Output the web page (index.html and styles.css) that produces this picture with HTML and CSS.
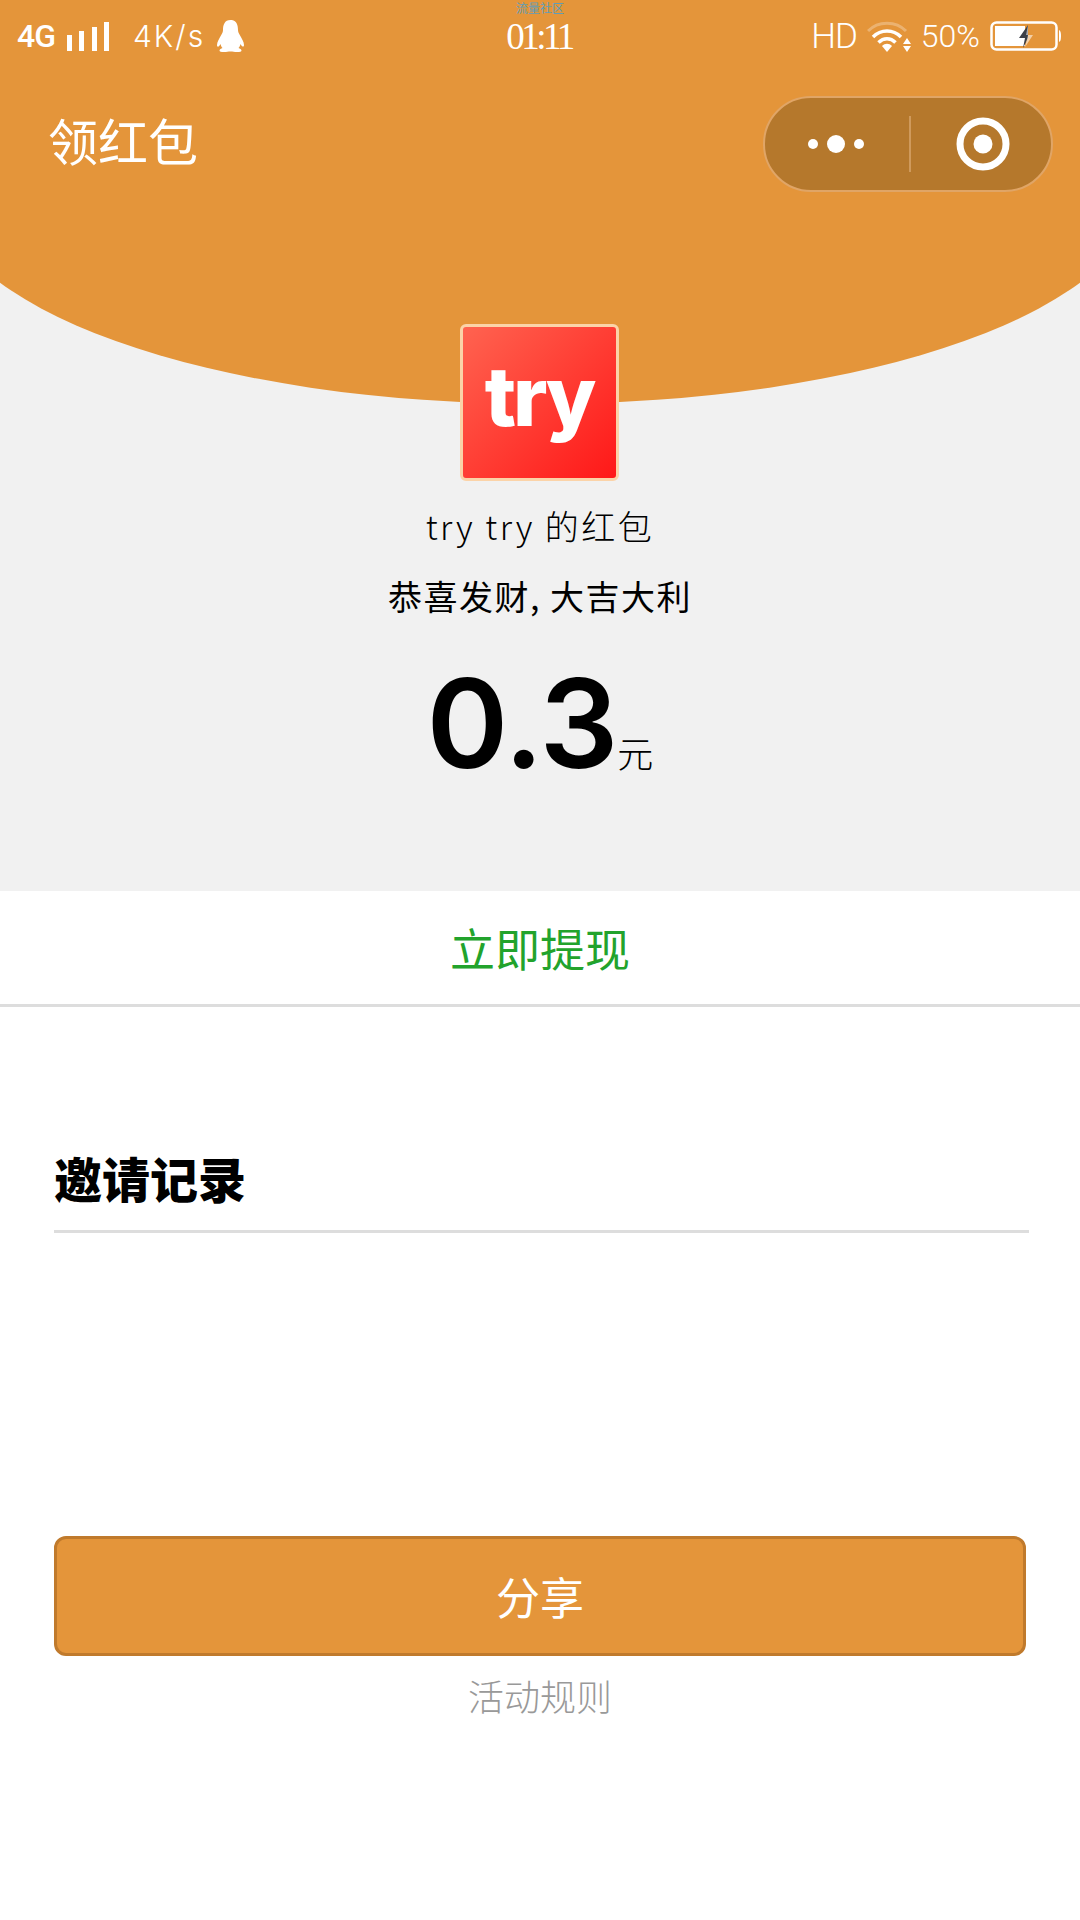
FILE: index.html
```html
<!DOCTYPE html>
<html lang="zh">
<head>
<meta charset="utf-8">
<title>领红包</title>
<link rel="stylesheet" href="styles.css">
</head>
<body>
<div class="page">
  <section class="hero">
    <div class="arc"></div>
    <div class="carrier">流量社区</div>
    <header class="status">
      <div class="status-left">
        <span class="net">4G</span>
        <svg class="signal" width="42" height="29" viewBox="0 0 42 29"><path d="M0 13h5v16H0zM12 9h5v20h-5zM25 5h5v24h-5zM37 0h5v29h-5z" fill="#fff"/></svg>
        <span class="speed">4K/s</span>
        <svg class="qq" width="27" height="32" viewBox="0 0 27 32"><path d="M13.500 0C7.500 0 6 5 6 10c0 1.500-.5 2.800-1.500 4.500C2.500 18 0 22 0 25c0 1.500.7 2 1.500 1.500.8-.5 1.500-1.500 2-2.500.3 1.500 1 3 2 4-1.500.6-3 1.300-3 2.500S4 32 7 32c2.500 0 4.500-.6 6.500-.6s4 .6 6.500.6c3 0 4.500-.4 4.500-1.600s-1.500-1.900-3-2.500c1-1 1.700-2.500 2-4 .5 1 1.200 2 2 2.500.8.5 1.500 0 1.500-1.500 0-3-2.500-7-4.500-10.500-1-1.700-1.500-3-1.500-4.500 0-5-1.500-10-7.500-10z" fill="#fff"/></svg>
      </div>
      <span class="time">01:11</span>
      <div class="status-right">
        <span class="hd">HD</span>
        <svg class="wifi" width="46" height="32" viewBox="0 0 46 32"><path d="M1 11C11 .5 29 .5 39 11" fill="none" stroke="#fff" stroke-opacity=".28" stroke-width="3"/><path d="M6 17c8-8 20-8 28 0" fill="none" stroke="#fff" stroke-width="3.500"/><path d="M11.500 22.500c5-5 12-5 17 0" fill="none" stroke="#fff" stroke-width="3.500"/><path d="M15 26c3-3 7-3 10 0l-5 6z" fill="#fff"/><path d="M40 18l4 6h-8zM40 32l4-6h-8z" fill="#fff"/></svg>
        <span class="percent">50%</span>
        <svg class="battery" width="71" height="30" viewBox="0 0 71 30"><rect x="1.500" y="1.500" width="65" height="27" rx="5" fill="none" stroke="#fff" stroke-width="2.500"/><rect x="5" y="5" width="30" height="20" fill="#fff"/><path d="M69 9c1.500.5 2 2.500 2 6s-.5 5.500-2 6z" fill="#fff"/><path d="M38 4l-9 13h6l-2 10 5-10z" fill="#3c3f47"/><path d="M38 4l-2 10h7l-8 12 3-12z" fill="#fff" fill-opacity=".55"/></svg>
      </div>
    </header>
    <nav class="nav">
      <h1 class="nav-title">领红包</h1>
      <div class="capsule">
        <div class="capsule-part capsule-more">
          <svg width="60" height="20" viewBox="0 0 60 20"><circle cx="5" cy="10" r="5" fill="#fff"/><circle cx="28" cy="10" r="9" fill="#fff"/><circle cx="51" cy="10" r="5" fill="#fff"/></svg>
        </div>
        <div class="capsule-line"></div>
        <div class="capsule-part capsule-target">
          <svg width="54" height="54" viewBox="0 0 54 54"><circle cx="27" cy="27" r="23" fill="none" stroke="#fff" stroke-width="7"/><circle cx="27" cy="27" r="9.500" fill="#fff"/></svg>
        </div>
      </div>
    </nav>
    <div class="summary">
      <div class="logo">try</div>
      <p class="sender">try try 的红包</p>
      <p class="wish">恭喜发财, 大吉大利</p>
      <p class="amount"><span class="amount-value">0.3</span><span class="amount-unit">元</span></p>
    </div>
  </section>
  <div class="withdraw">立即提现</div>
  <section class="records">
    <h2 class="records-title">邀请记录</h2>
  </section>
  <button class="share" type="button">分享</button>
  <div class="rules">活动规则</div>
</div>
</body>
</html>
```

FILE: styles.css
```css
* { box-sizing: border-box; }
html, body { margin: 0; padding: 0; background: #fff; }
body { font-family: "Noto Sans CJK SC", "Noto Sans", sans-serif; color: #000; }
p, h1, h2 { margin: 0; }
.page { width: 1080px; height: 1920px; overflow: hidden; background: #fff; }

.hero { position: relative; height: 891px; background: #f1f1f1; overflow: hidden; }
.arc { position: absolute; left: -60px; top: 0; width: 1200px; height: 404px; border-radius: 0 0 600px 600px / 0 0 215px 215px; background: #e4953a; }
.carrier { position: absolute; top: 0; left: 0; right: 0; text-align: center; font-size: 12px; line-height: 16px; color: #5f9db8; }

.status { position: relative; height: 72px; display: grid; grid-template-columns: 1fr auto 1fr; align-items: center; padding: 0 19px 0 17px; color: #fff; }
.status-left, .status-right { display: flex; align-items: center; }
.status-right { justify-content: flex-end; }
.net { font-family: Roboto, sans-serif; font-weight: 500; font-size: 32px; letter-spacing: -1px; }
.signal { margin-left: 12px; }
.speed { margin-left: 24px; font-family: Inter, sans-serif; font-weight: 300; font-size: 30px; letter-spacing: 2px; }
.qq { margin-left: 12px; }
.time { font-family: "Liberation Serif", serif; font-size: 37px; letter-spacing: -3.500px; }
.hd { font-family: Roboto, sans-serif; font-weight: 300; font-size: 35px; letter-spacing: -1px; }
.wifi { margin-left: 10px; }
.percent { margin-left: 8px; font-family: Roboto, sans-serif; font-weight: 300; font-size: 32px; }
.battery { margin-left: 10px; }

.nav { position: relative; height: 144px; display: flex; align-items: center; justify-content: space-between; padding: 0 27px 0 48px; }
.nav-title { margin-bottom: 10px; font-size: 50px; line-height: 60px; font-weight: 400; color: #fff; }
.capsule { width: 290px; height: 96px; display: flex; align-items: center; border: 2px solid #e0a566; border-radius: 48px; background: #b5782c; }
.capsule-part { flex: 1; display: flex; justify-content: center; align-items: center; }
.capsule-more { padding-left: 5px; }
.capsule-target { padding-left: 4px; }
.capsule-line { width: 2px; height: 56px; margin-left: 2px; background: #cf9a5c; }

.summary { position: relative; display: flex; flex-direction: column; align-items: center; padding-top: 108px; }
.logo { width: 159px; height: 157px; margin-right: 2px; display: flex; justify-content: center; align-items: center; padding-bottom: 12px; border: 3px solid #fbd3a8; border-radius: 6px; background: linear-gradient(135deg, #ff6350, #ff1818); font-family: Inter, sans-serif; font-weight: 800; font-size: 82px; letter-spacing: -3px; color: #fff; }
.sender { margin-top: 21px; font-size: 34px; line-height: 48px; font-weight: 300; letter-spacing: 2.500px; }
.wish { margin-top: 22px; font-size: 34px; line-height: 48px; font-weight: 400; letter-spacing: 1.500px; }
.amount { margin-top: 33px; height: 140px; line-height: 140px; white-space: nowrap; }
.amount-value { font-family: Inter, sans-serif; font-weight: 600; font-size: 124px; letter-spacing: -1px; }
.amount-unit { font-size: 36px; font-weight: 300; }

.withdraw { height: 116px; display: flex; align-items: center; justify-content: center; border-bottom: 3px solid #ddd; font-size: 45px; color: #22a32c; }

.records { margin: 140px 51px 0 54px; padding-bottom: 23px; border-bottom: 3px solid #ddd; }
.records-title { font-size: 48px; line-height: 60px; font-weight: 900; }

.share { display: block; width: 972px; height: 120px; margin: 303px 0 0 54px; padding: 0; border: 3px solid #c07a2c; border-radius: 12px; background: #e4953a; color: #fff; font-family: inherit; font-size: 44px; }
.rules { margin-top: 15px; text-align: center; font-size: 36px; line-height: 48px; font-weight: 300; color: #999; }
```
